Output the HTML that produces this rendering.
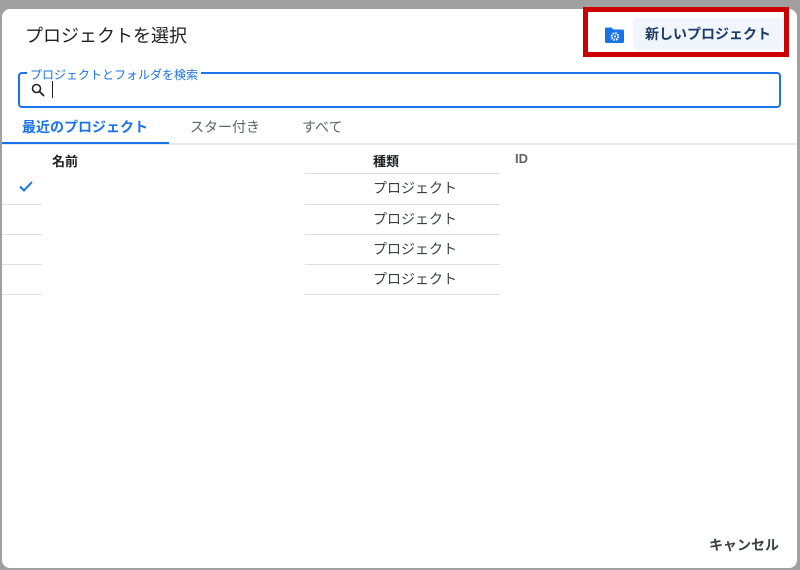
<!DOCTYPE html>
<html><head><meta charset="utf-8"><style>
body{margin:0;width:800px;height:570px;background:#a0a0a0;position:relative;overflow:hidden;font-family:"Liberation Sans","Noto Sans CJK JP",sans-serif;}
.dlg{position:absolute;left:2px;top:9px;width:795px;height:559px;background:#fff;border-radius:8px;}
.a{position:absolute;white-space:nowrap;}
.t{left:25px;top:22px;font-size:18px;color:#202124;}
.red{position:absolute;left:583px;top:7px;width:206px;height:50px;border:5px solid #cc0000;box-sizing:border-box;}
.btn{position:absolute;left:633px;top:18px;width:150px;height:32px;background:#f1f5fc;border-radius:4px;font-size:14px;font-weight:bold;color:#1a3a6b;line-height:32px;text-align:center;}
.inp{position:absolute;left:18px;top:72px;width:763px;height:36px;border:2px solid #1a73e8;border-radius:4px;box-sizing:border-box;}
.lbl{left:27px;top:66px;font-size:12px;color:#1a73e8;background:#fff;padding:0 3px;}
.tab{top:117px;font-size:14px;}
.line{position:absolute;height:1px;background:#e0e0e0;}
.th{top:151px;font-size:13px;font-weight:bold;color:#202124;}
.td{left:373px;font-size:14px;color:#3c4043;}
</style></head><body>
<div class="dlg"></div>
<div class="a t">プロジェクトを選択</div>
<div class="red"></div>
<svg class="a" style="left:604px;top:27px" width="21" height="17" viewBox="0 0 21 17"><path d="M1 2a1.5 1.5 0 0 1 1.5-1.5h5l2 2h9a1.5 1.5 0 0 1 1.5 1.5v10.5a1.5 1.5 0 0 1-1.5 1.5h-16A1.5 1.5 0 0 1 1 14.5z" fill="#1a73e8"/><circle cx="11" cy="9.5" r="3.3" fill="none" stroke="#fff" stroke-width="2" stroke-dasharray="1.6 1"/><circle cx="11" cy="9.5" r="1" fill="#fff"/></svg>
<div class="btn">新しいプロジェクト</div>
<div class="inp"></div>
<div class="a lbl">プロジェクトとフォルダを検索</div>
<svg class="a" style="left:31px;top:83px" width="14" height="14" viewBox="0 0 14 14"><circle cx="5.5" cy="5.5" r="4" fill="none" stroke="#202124" stroke-width="1.6"/><path d="M8.5 8.5l4.5 4.5" stroke="#202124" stroke-width="1.8"/></svg>
<div class="a" style="left:52px;top:81px;width:1px;height:17px;background:#202124"></div>
<div class="a tab" style="left:22px;color:#1a73e8;font-weight:bold">最近のプロジェクト</div>
<div class="a tab" style="left:190px;color:#5f6368">スター付き</div>
<div class="a tab" style="left:302px;color:#5f6368">すべて</div>
<div class="line" style="left:2px;top:143px;width:795px;height:2px;background:#e8eaed"></div>
<div class="a" style="left:2px;top:142px;width:167px;height:2px;background:#1a73e8"></div>
<div class="a th" style="left:52px">名前</div>
<div class="a th" style="left:373px">種類</div>
<div class="a th" style="left:515px;color:#5f6368">ID</div>
<svg class="a" style="left:19px;top:181px" width="14" height="11" viewBox="0 0 14 11"><path d="M1 5.5l4 4L13 1" fill="none" stroke="#1a73e8" stroke-width="2"/></svg>
<div class="a td" style="top:178px">プロジェクト</div>
<div class="a td" style="top:209px">プロジェクト</div>
<div class="a td" style="top:239px">プロジェクト</div>
<div class="a td" style="top:269px">プロジェクト</div>
<div class="line" style="left:305px;top:173px;width:195px"></div>
<div class="line" style="left:2px;top:204px;width:40px"></div><div class="line" style="left:305px;top:204px;width:195px"></div>
<div class="line" style="left:2px;top:234px;width:40px"></div><div class="line" style="left:305px;top:234px;width:195px"></div>
<div class="line" style="left:2px;top:264px;width:40px"></div><div class="line" style="left:305px;top:264px;width:195px"></div>
<div class="line" style="left:2px;top:294px;width:40px"></div><div class="line" style="left:305px;top:294px;width:195px"></div>
<div class="a" style="left:709px;top:535px;font-size:14px;font-weight:bold;color:#3c4043">キャンセル</div>
</body></html>
